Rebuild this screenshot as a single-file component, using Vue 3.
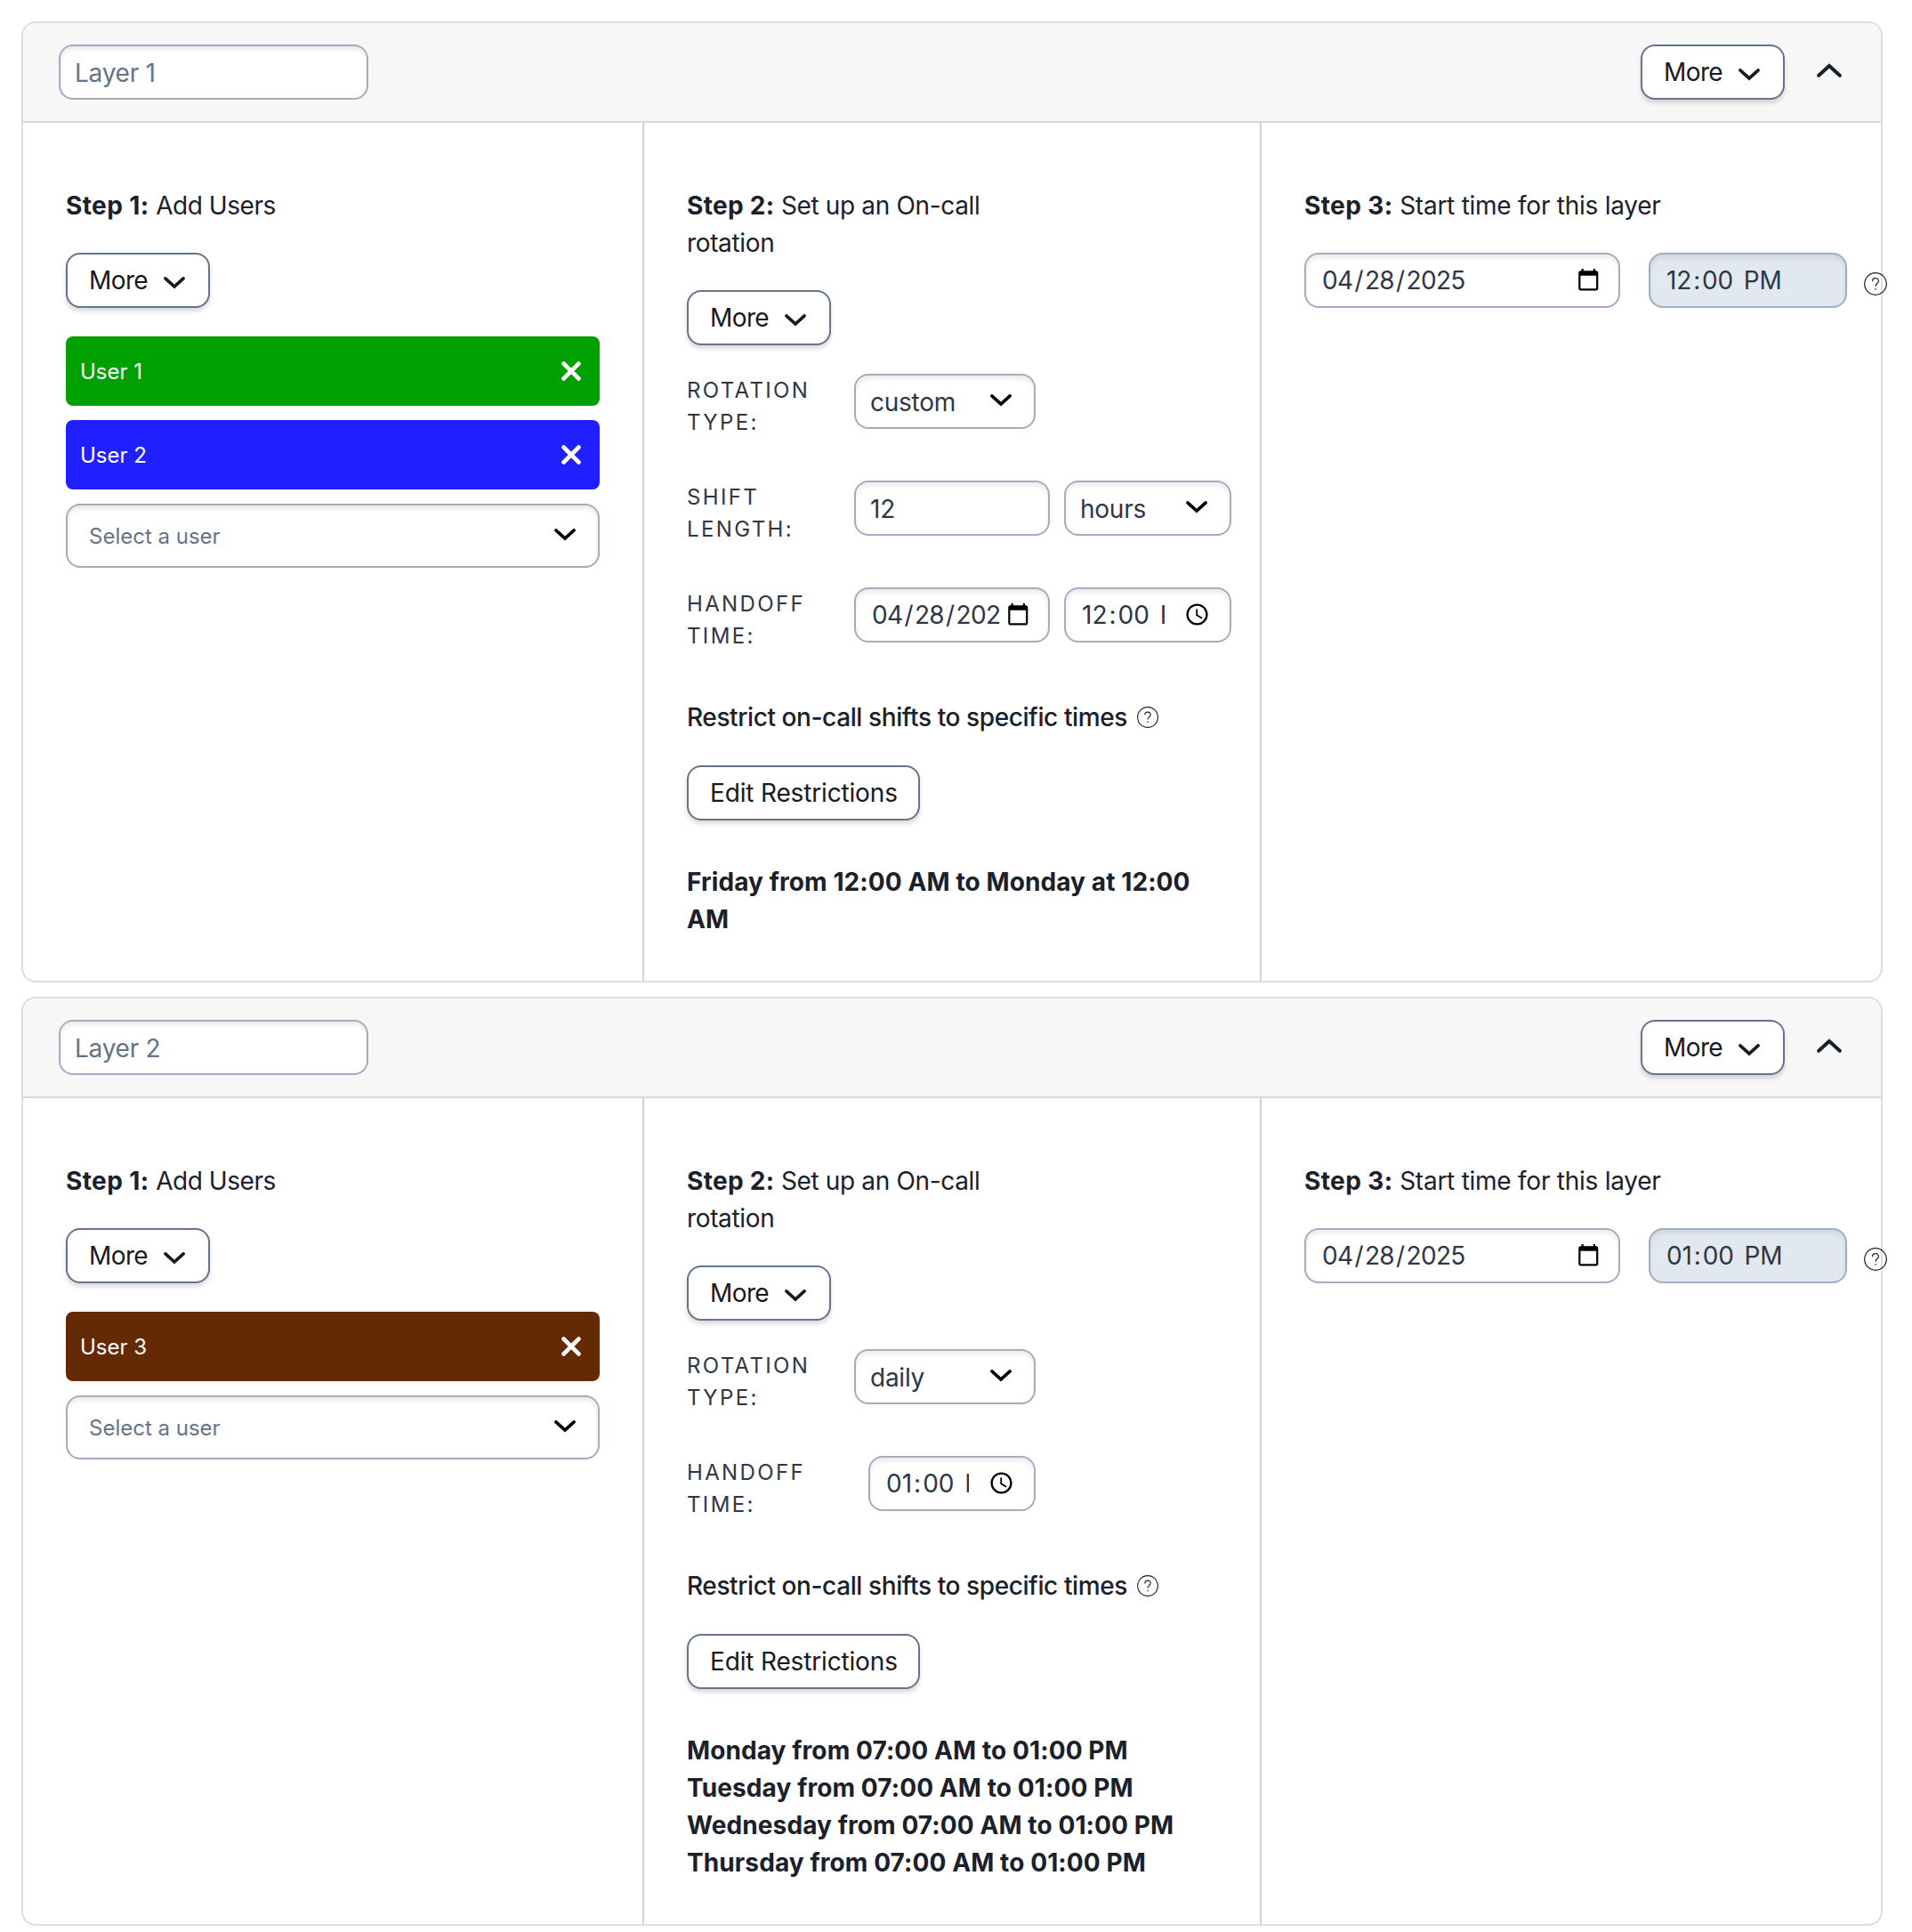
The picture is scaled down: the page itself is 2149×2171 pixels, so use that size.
<template>
  <div class="layers">
    <section v-for="layer in layers" :key="layer.name" class="layer">
      <header class="layer-header">
        <div class="field name-field">{{ layer.name }}</div>
        <div class="header-actions">
          <button class="btn more">
            More
            <svg class="chevron" viewBox="0 0 24 14"><path d="M1.9 1.9L12 11 22.1 1.9" /></svg>
          </button>
          <svg class="collapse-icon" viewBox="0 0 28 16"><path d="M2.2 13.8L14 3l11.8 10.8" /></svg>
        </div>
      </header>

      <div class="layer-body">
        <div class="column">
          <p class="step"><b>Step 1:</b> <span class="users-title">Add Users</span></p>
          <button class="btn more">
            More
            <svg class="chevron" viewBox="0 0 24 14"><path d="M1.9 1.9L12 11 22.1 1.9" /></svg>
          </button>
          <div class="users">
            <div
              v-for="user in layer.users"
              :key="user.name"
              class="user"
              :style="{ background: user.color }"
            >
              <span>{{ user.name }}</span>
              <svg class="remove-icon" viewBox="0 0 22 22"><path d="M2.6 2.6l16.8 16.8M19.4 2.6L2.6 19.4" /></svg>
            </div>
            <div class="field user-select">
              <span>Select a user</span>
              <svg class="chevron" viewBox="0 0 24 14"><path d="M1.9 1.9L12 11 22.1 1.9" /></svg>
            </div>
          </div>
        </div>

        <div class="column middle">
          <p class="step narrow"><b>Step 2:</b> Set up an On-call rotation</p>
          <button class="btn more">
            More
            <svg class="chevron" viewBox="0 0 24 14"><path d="M1.9 1.9L12 11 22.1 1.9" /></svg>
          </button>

          <div class="settings">
            <div class="setting">
              <span class="label">Rotation type:</span>
              <div class="field select rotation">
                <span>{{ layer.rotation }}</span>
                <svg class="chevron" viewBox="0 0 24 14"><path d="M1.9 1.9L12 11 22.1 1.9" /></svg>
              </div>
            </div>
            <div v-if="layer.shiftLength" class="setting">
              <span class="label">Shift length:</span>
              <div class="field amount"><span>{{ layer.shiftLength }}</span></div>
              <div class="field select unit">
                <span>{{ layer.shiftUnit }}</span>
                <svg class="chevron" viewBox="0 0 24 14"><path d="M1.9 1.9L12 11 22.1 1.9" /></svg>
              </div>
            </div>
            <div class="setting" :class="{ 'time-only': !layer.handoffDate }">
              <span class="label">Handoff time:</span>
              <div v-if="layer.handoffDate" class="field handoff-date">
                <div class="segments">
                  <template v-for="(part, i) in layer.handoffDate" :key="i">
                    <template v-if="i">/</template><span class="segment">{{ part }}</span>
                  </template>
                </div>
                <svg class="picker-icon" viewBox="0 0 24 24"><path d="M20 3h-1V1h-2v2H7V1H5v2H4c-1.1 0-2 .9-2 2v16c0 1.1.9 2 2 2h16c1.1 0 2-.9 2-2V5c0-1.1-.9-2-2-2zm0 18H4V8h16v13z" /></svg>
              </div>
              <div class="field handoff-time">
                <div class="segments">
                  <span class="segment">{{ layer.handoffTime[0] }}</span>:<span class="segment">{{ layer.handoffTime[1] }}</span>&nbsp;<span class="segment">{{ layer.handoffTime[2] }}</span>
                </div>
                <svg class="picker-icon" viewBox="0 0 24 24"><path d="M11.99 2C6.47 2 2 6.48 2 12s4.47 10 9.99 10C17.52 22 22 17.52 22 12S17.52 2 11.99 2zM12 20c-4.42 0-8-3.58-8-8s3.58-8 8-8 8 3.58 8 8-3.58 8-8 8zm.5-13H11v6l5.25 3.15.75-1.23-4.5-2.67z" /></svg>
              </div>
            </div>
          </div>

          <p class="restrict">
            Restrict on-call shifts to specific times
            <svg class="help-icon" viewBox="0 0 26 26">
              <circle cx="13" cy="13" r="12.3" />
              <path d="M9.5 10.2c0-4.8 7-4.6 7-.5 0 2.7-3.5 2.9-3.5 6M13 18v1.8" />
            </svg>
          </p>
          <button class="btn edit">Edit Restrictions</button>
          <div class="restrictions">
            <div v-for="line in layer.restrictions" :key="line">{{ line }}</div>
          </div>
        </div>

        <div class="column">
          <p class="step"><b>Step 3:</b> Start time for this layer</p>
          <div class="start">
            <div class="field start-date">
              <div class="segments">
                <template v-for="(part, i) in layer.startDate" :key="i">
                  <template v-if="i">/</template><span class="segment">{{ part }}</span>
                </template>
              </div>
              <svg class="picker-icon" viewBox="0 0 24 24"><path d="M20 3h-1V1h-2v2H7V1H5v2H4c-1.1 0-2 .9-2 2v16c0 1.1.9 2 2 2h16c1.1 0 2-.9 2-2V5c0-1.1-.9-2-2-2zm0 18H4V8h16v13z" /></svg>
            </div>
            <div class="field start-time">
              <div class="segments">
                <span class="segment">{{ layer.startTime[0] }}</span>:<span class="segment">{{ layer.startTime[1] }}</span>&nbsp;<span class="segment">{{ layer.startTime[2] }}</span>
              </div>
            </div>
            <svg class="help-icon large" viewBox="0 0 26 26">
              <circle cx="13" cy="13" r="12.3" />
              <path d="M9.5 10.2c0-4.8 7-4.6 7-.5 0 2.7-3.5 2.9-3.5 6M13 18v1.8" />
            </svg>
          </div>
        </div>
      </div>
    </section>
  </div>
</template>

<script setup>
import { ref } from 'vue'

const layers = ref([
  {
    name: 'Layer 1',
    users: [
      { name: 'User 1', color: '#00a000' },
      { name: 'User 2', color: '#1f1fff' }
    ],
    rotation: 'custom',
    shiftLength: 12,
    shiftUnit: 'hours',
    handoffDate: ['04', '28', '2025'],
    handoffTime: ['12', '00', 'PM'],
    restrictions: ['Friday from 12:00 AM to Monday at 12:00 AM'],
    startDate: ['04', '28', '2025'],
    startTime: ['12', '00', 'PM']
  },
  {
    name: 'Layer 2',
    users: [{ name: 'User 3', color: '#632a04' }],
    rotation: 'daily',
    handoffTime: ['01', '00', 'PM'],
    restrictions: [
      'Monday from 07:00 AM to 01:00 PM',
      'Tuesday from 07:00 AM to 01:00 PM',
      'Wednesday from 07:00 AM to 01:00 PM',
      'Thursday from 07:00 AM to 01:00 PM'
    ],
    startDate: ['04', '28', '2025'],
    startTime: ['01', '00', 'PM']
  }
])
</script>

<style>
body {
  background: #fff;
}
</style>

<style scoped>
.layers {
  width: 2149px;
  padding: 24px 33px 0 24px;
  display: flex;
  flex-direction: column;
  gap: 16px;
  font-family: Inter, sans-serif;
  font-size: 28px;
  line-height: 42px;
  letter-spacing: -0.25px;
  color: #1a202c;
}

.layers,
.layers * {
  box-sizing: border-box;
}

p {
  margin: 0;
}

.layer {
  border: 2px solid #dedede;
  border-radius: 16px;
}

.layer-header {
  display: flex;
  align-items: center;
  justify-content: space-between;
  height: 112px;
  padding: 0 44px 0 40px;
  background: #f7f7f7;
  border-bottom: 2px solid #d8d8d8;
  border-radius: 14px 14px 0 0;
}

.header-actions {
  display: flex;
  align-items: center;
  gap: 36px;
}

.layer-body {
  display: grid;
  grid-template-columns: repeat(3, 696px);
}

.column {
  padding: 72px 48px 48px;
}

.column.middle {
  padding-right: 32px;
  border-left: 2px solid #cbd5e0;
  border-right: 2px solid #cbd5e0;
}

.step {
  margin-bottom: 32px;
}

.step b {
  letter-spacing: 0.4px;
}

.step.narrow {
  max-width: 400px;
  letter-spacing: -0.35px;
}

.step.narrow b {
  letter-spacing: 0.3px;
}

.users-title {
  letter-spacing: -0.45px;
}

.btn {
  display: inline-flex;
  align-items: center;
  height: 62px;
  padding: 0 24px;
  background: #fff;
  border: 2px solid #64748b;
  border-radius: 16px;
  box-shadow: 0 4px 5px rgba(0, 0, 0, 0.14);
  font: inherit;
  letter-spacing: -0.16px;
  color: #171923;
  vertical-align: top;
}

.btn.more {
  justify-content: space-between;
  width: 162px;
  padding-right: 26px;
  letter-spacing: -0.6px;
}

.btn.edit {
  width: 262px;
  white-space: nowrap;
}

.chevron {
  flex: none;
  width: 24px;
  height: 14px;
  margin-bottom: 2px;
  fill: none;
  stroke: #000;
  stroke-width: 3.6;
  stroke-linecap: round;
}

.btn .chevron {
  margin: 6px 0 0;
  stroke: #171923;
}

.collapse-icon {
  width: 28px;
  height: 16px;
  margin-bottom: 4px;
  fill: none;
  stroke: #1a202c;
  stroke-width: 4;
  stroke-linecap: round;
}

.field {
  display: flex;
  flex: none;
  align-items: center;
  height: 62px;
  padding: 0 16px;
  background: #fff;
  border: 2px solid #a0aec0;
  border-radius: 16px;
  box-shadow: inset 0 4px 5px rgba(0, 0, 0, 0.08);
  color: #2d3748;
}

.field > span,
.user > span {
  padding-top: 2px;
}

.name-field {
  width: 348px;
  padding-top: 2px;
  color: #64748b;
}

.users {
  display: flex;
  flex-direction: column;
  gap: 16px;
  margin-top: 32px;
  font-size: 24px;
  letter-spacing: 0;
}

.user {
  display: flex;
  align-items: center;
  justify-content: space-between;
  height: 78px;
  padding: 0 21px 0 16px;
  border-radius: 8px;
  color: #fff;
}

.remove-icon {
  width: 22px;
  height: 22px;
  fill: none;
  stroke: #fff;
  stroke-width: 4.8;
  stroke-linecap: round;
}

.user-select {
  justify-content: space-between;
  height: 72px;
  padding: 0 25px 0 24px;
  color: #64748b;
}

.settings {
  margin-top: 32px;
  display: flex;
  flex-direction: column;
  gap: 48px;
}

.setting {
  display: flex;
  gap: 16px;
  height: 72px;
}

.label {
  width: 172px;
  padding: 1px 20px 0 0;
  font-size: 24px;
  line-height: 36px;
  letter-spacing: 2.35px;
  text-transform: uppercase;
  color: #2d3748;
}

.time-only .label {
  width: 188px;
}

.select {
  justify-content: space-between;
  padding-right: 25px;
}

.rotation {
  width: 204px;
}

.amount,
.handoff-date {
  width: 220px;
}

.unit,
.handoff-time {
  width: 188px;
}

.segments {
  flex: 1;
  min-width: 0;
  overflow: hidden;
  white-space: nowrap;
}

.segment {
  padding: 0 2px;
}

.picker-icon {
  flex: none;
  width: 26.5px;
  height: 26.5px;
  margin: 0 0 2px 5px;
  fill: #000;
}

.handoff-date,
.start-date {
  padding-right: 21px;
  letter-spacing: -0.65px;
}

.handoff-time {
  padding-right: 22px;
  letter-spacing: 0;
}

.handoff-time .picker-icon {
  width: 29px;
  height: 29px;
  margin-left: 22px;
}

.restrict {
  display: flex;
  align-items: center;
  gap: 11px;
  margin: 53px 0 33px;
  font-weight: 500;
  letter-spacing: -0.4px;
}

.help-icon {
  flex: none;
  width: 24px;
  height: 24px;
  fill: none;
  stroke: #1a202c;
  stroke-width: 1.2;
}

.help-icon.large {
  width: 26px;
  height: 26px;
  margin: 8px 0 0 19px;
}

.restrictions {
  margin-top: 48px;
  font-weight: 700;
  letter-spacing: 0.1px;
}

.start {
  display: flex;
  align-items: center;
}

.start-date {
  width: 355px;
  margin-right: 32px;
}

.start-time {
  width: 223px;
  background: #e2e8f0;
  letter-spacing: -0.15px;
}
</style>
